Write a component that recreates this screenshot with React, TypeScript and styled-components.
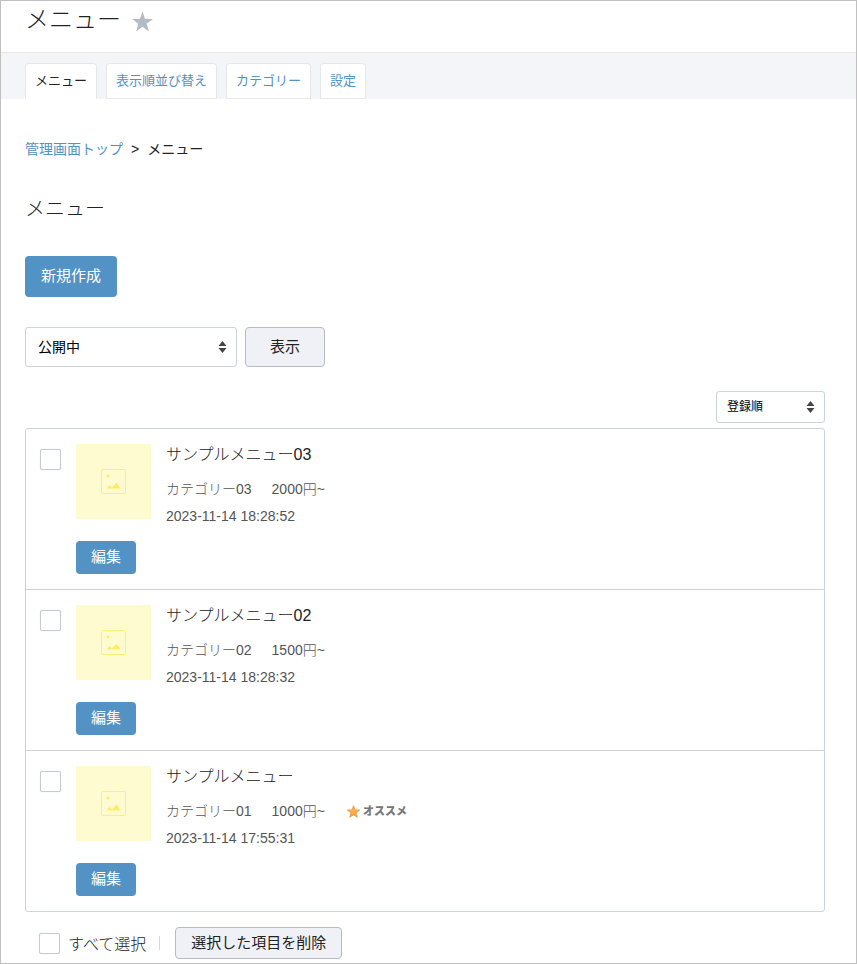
import React from "react";
import styled, { createGlobalStyle } from "styled-components";

const GlobalStyle = createGlobalStyle`
  *, *::before, *::after { box-sizing: border-box; }
  body {
    margin: 0;
    background: #fff;
    color: #222;
    font-family: "Liberation Sans", "Noto Sans CJK JP", sans-serif;
    font-size: 14px;
    font-weight: 300;
  }
  button, input, select { font: inherit; color: inherit; margin: 0; }
`;

const Page = styled.div`
  min-height: 100vh;
  border: 1px solid #c0c0c0;
`;

const Header = styled.header`
  display: flex;
  align-items: center;
  gap: 11px;
  padding: 1px 24px 14px;
  border-bottom: 1px solid #e9e9df;
`;

const PageTitle = styled.h1`
  margin: 0;
  font-size: 24px;
  line-height: 36px;
  font-weight: 300;
`;

const StarButton = styled.button`
  display: flex;
  margin-top: 3px;
  padding: 0;
  border: 0;
  background: none;
`;

const TabBar = styled.nav`
  display: flex;
  gap: 9px;
  padding: 10px 24px 0;
  background: #f4f5f8;
`;

const Tab = styled.a<{ $active?: boolean }>`
  padding: 0 9px;
  border: 1px solid #e5e7eb;
  border-bottom-color: ${(p) => (p.$active ? "#fff" : "#e9e9df")};
  border-radius: 4px 4px 0 0;
  background: #fff;
  color: ${(p) => (p.$active ? "#222" : "#5392c4")};
  font-size: 13px;
  font-weight: 400;
  line-height: 34px;
  text-decoration: none;
`;

const Content = styled.main`
  padding: 38px 31px 4px 24px;
`;

const Breadcrumb = styled.nav`
  display: flex;
  gap: 8px;
  font-weight: 400;
  line-height: 24px;

  a {
    color: #5392c4;
    text-decoration: none;
  }
`;

const SectionTitle = styled.h2`
  margin: 32px 0 31px;
  font-size: 20px;
  line-height: 32px;
  font-weight: 300;
`;

const PrimaryButton = styled.button<{ $small?: boolean }>`
  display: block;
  height: ${(p) => (p.$small ? 33 : 41)}px;
  padding: 0 ${(p) => (p.$small ? 15 : 16)}px 4px;
  border: 0;
  border-radius: 4px;
  background: #5392c4;
  color: #fff;
  font-size: 15px;
  font-weight: 400;
`;

const SecondaryButton = styled.button<{ $small?: boolean }>`
  height: ${(p) => (p.$small ? 32 : 40)}px;
  padding: 0 ${(p) => (p.$small ? 15 : 24)}px 4px;
  border: 1px solid #b6bcc6;
  border-radius: 4px;
  background: #f0f1f6;
  font-size: 15px;
  font-weight: 400;
`;

const Filter = styled.form`
  display: flex;
  gap: 8px;
  margin: 30px 0 24px;
`;

const SelectBox = styled.div<{ $small?: boolean }>`
  position: relative;
  width: ${(p) => (p.$small ? 109 : 212)}px;

  select {
    display: block;
    width: 100%;
    height: ${(p) => (p.$small ? 32 : 40)}px;
    padding: 0 ${(p) => (p.$small ? 10 : 12)}px;
    border: 1px solid #cdd3da;
    border-radius: 3px;
    background: #fff;
    color: #000;
    font-size: ${(p) => (p.$small ? 12 : 14)}px;
    font-weight: 400;
    appearance: none;
  }

  svg {
    position: absolute;
    top: 50%;
    right: 10px;
    transform: translateY(-50%);
    pointer-events: none;
  }
`;

const SortBar = styled.div`
  display: flex;
  justify-content: flex-end;
  margin-bottom: 5px;
`;

const List = styled.ul`
  margin: 0;
  padding: 0;
  border: 1px solid #cdd3da;
  border-radius: 3px;
  list-style: none;
`;

const Item = styled.li`
  display: flex;
  align-items: flex-start;
  gap: 15px;
  padding: 15px 14px;

  & + & { border-top: 1px solid #cdd3da; }
`;

const Checkbox = styled.input`
  flex: none;
  width: 21px;
  height: 21px;
  border: 1px solid #c5cbd3;
  border-radius: 2px;
  background: #fff;
  box-shadow: 0 0 1px #cdd3da;
  appearance: none;

  ${Item} > & { margin-top: 5px; }
  &:checked { background: #5392c4; }
`;

const ItemMedia = styled.div`
  display: flex;
  flex-direction: column;
  align-items: flex-start;
  gap: 22px;
  width: 75px;
`;

const Thumbnail = styled.div`
  display: flex;
  align-items: center;
  justify-content: center;
  width: 75px;
  height: 75px;
  background: #fffbd1;
`;

const ItemBody = styled.div`
  flex: 1;
  color: #555;
  line-height: 27px;
`;

const ItemTitle = styled.h3`
  margin: 0 0 10px;
  color: #222;
  font-size: 16px;
  line-height: 22px;
  font-weight: 300;
`;

const ItemMeta = styled.div`
  display: flex;
  align-items: center;
  gap: 20px;
  height: 27px;
`;

const Recommended = styled.span`
  display: flex;
  align-items: center;
  gap: 3px;
  margin-left: 2px;
  color: #777;
  font-size: 11px;
  font-weight: 900;
`;

const BulkBar = styled.div`
  display: flex;
  align-items: center;
  margin-top: 15px;
  padding-left: 14px;
`;

const SelectAll = styled.label`
  display: flex;
  align-items: center;
  gap: 8px;
  font-size: 16px;
`;

const Divider = styled.span`
  width: 1px;
  height: 14px;
  margin: 0 15px 0 13px;
  background: #cdd9e5;
`;

const Arrows = () => (
  <svg width="9" height="12" viewBox="0 0 9 12" fill="#444" aria-hidden="true">
    <path d="M4.5 0 8.5 5h-8zM4.5 12 .5 7h8z" />
  </svg>
);

const PlaceholderIcon = () => (
  <svg width="25" height="25" viewBox="0 0 25 25" aria-hidden="true">
    <rect x=".5" y=".5" width="24" height="24" rx="1.5" fill="none" stroke="#ffef7a" />
    <circle cx="7" cy="7" r="1.4" fill="#ffec66" />
    <path d="M5.5 19.5 8.5 16l2.4 2.5 4.5-4.8 4.3 5.8z" fill="#ffec66" />
  </svg>
);

const starPath = "M11 0 13.6 7.7 22 7.8 15.3 12.8 17.8 21 11 16 4.2 21 6.7 12.8 0 7.8 8.4 7.7z";

const items = [
  { title: "サンプルメニュー03", category: "カテゴリー03", price: "2000円~", date: "2023-11-14 18:28:52" },
  { title: "サンプルメニュー02", category: "カテゴリー02", price: "1500円~", date: "2023-11-14 18:28:32" },
  { title: "サンプルメニュー", category: "カテゴリー01", price: "1000円~", date: "2023-11-14 17:55:31", recommended: true },
];

const tabs = ["メニュー", "表示順並び替え", "カテゴリー", "設定"];

export default function App() {
  return (
    <>
      <GlobalStyle />
      <Page>
        <Header>
          <PageTitle>メニュー</PageTitle>
          <StarButton type="button" aria-label="お気に入り">
            <svg width="21" height="21" viewBox="0 0 22 21" fill="#b3bbc4">
              <path d={starPath} />
            </svg>
          </StarButton>
        </Header>
        <TabBar>
          {tabs.map((tab, i) => (
            <Tab key={tab} href="#" $active={i === 0}>{tab}</Tab>
          ))}
        </TabBar>
        <Content>
          <Breadcrumb>
            <a href="#">管理画面トップ</a>
            <span>&gt;</span>
            <span>メニュー</span>
          </Breadcrumb>
          <SectionTitle>メニュー</SectionTitle>
          <PrimaryButton type="button">新規作成</PrimaryButton>
          <Filter onSubmit={(e) => e.preventDefault()}>
            <SelectBox>
              <select aria-label="公開状態">
                <option>公開中</option>
              </select>
              <Arrows />
            </SelectBox>
            <SecondaryButton type="submit">表示</SecondaryButton>
          </Filter>
          <SortBar>
            <SelectBox $small>
              <select aria-label="並び順">
                <option>登録順</option>
              </select>
              <Arrows />
            </SelectBox>
          </SortBar>
          <List>
            {items.map((item) => (
              <Item key={item.title}>
                <Checkbox type="checkbox" aria-label={item.title} />
                <ItemMedia>
                  <Thumbnail><PlaceholderIcon /></Thumbnail>
                  <PrimaryButton type="button" $small>編集</PrimaryButton>
                </ItemMedia>
                <ItemBody>
                  <ItemTitle>{item.title}</ItemTitle>
                  <ItemMeta>
                    <span>{item.category}</span>
                    <span>{item.price}</span>
                    {item.recommended && (
                      <Recommended>
                        <svg width="13" height="13" viewBox="-1 -1 24 23" aria-hidden="true">
                          <defs>
                            <linearGradient id="gold" x1="0" y1="0" x2="0" y2="1">
                              <stop offset="0" stopColor="#ffc95c" />
                              <stop offset="1" stopColor="#ff9540" />
                            </linearGradient>
                          </defs>
                          <path d={starPath} fill="url(#gold)" stroke="#f2a04a" strokeWidth="2" strokeLinejoin="round" />
                        </svg>
                        オススメ
                      </Recommended>
                    )}
                  </ItemMeta>
                  <div>{item.date}</div>
                </ItemBody>
              </Item>
            ))}
          </List>
          <BulkBar>
            <SelectAll>
              <Checkbox type="checkbox" />
              すべて選択
            </SelectAll>
            <Divider />
            <SecondaryButton type="button" $small>選択した項目を削除</SecondaryButton>
          </BulkBar>
        </Content>
      </Page>
    </>
  );
}
